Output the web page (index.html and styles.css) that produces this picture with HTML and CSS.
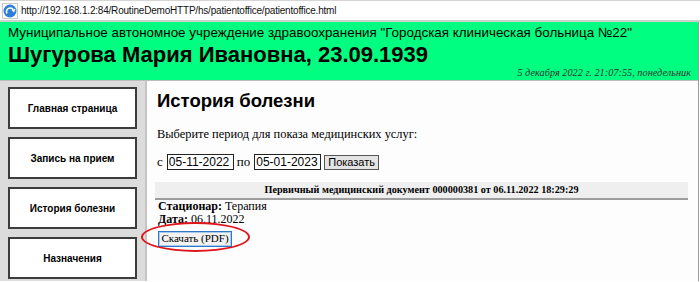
FILE: index.html
```html
<!DOCTYPE html>
<html lang="ru">
<head>
    <meta charset="UTF-8">
    <title>Личный кабинет пациента</title>
    <link rel="stylesheet" href="styles.css">
</head>
<body>
    <div class="addr-bar">
        <span class="addr-icon">
            <svg width="14" height="14" viewBox="0 0 14 14">
                <circle cx="7" cy="7" r="6.5" fill="#2f7fd8"/>
                <path d="M4 9.5 A3.6 3.6 0 1 1 10.5 6.5" fill="none" stroke="#fff" stroke-width="1.6"/>
                <path d="M9 5.5 L10.8 7.4 L12 5" fill="none" stroke="#fff" stroke-width="1.2"/>
            </svg>
        </span>
        <span class="addr-url">http://192.168.1.2:84/RoutineDemoHTTP/hs/patientoffice/patientoffice.html</span>
    </div>
    <div class="page">
        <div class="header">
            <div class="org">Муниципальное автономное учреждение здравоохранения "Городская клиническая больница №22"</div>
            <div class="patient">Шугурова Мария Ивановна, 23.09.1939</div>
            <div class="now">5 декабря 2022 г. 21:07:55, понедельник</div>
        </div>
        <div class="main">
            <div class="sidebar">
                <button class="nav-btn">Главная страница</button>
                <button class="nav-btn">Запись на прием</button>
                <button class="nav-btn">История болезни</button>
                <button class="nav-btn">Назначения</button>
            </div>
            <div class="content">
                <h1>История болезни</h1>
                <p class="hint">Выберите период для показа медицинских услуг:</p>
                <div class="period">
                    с <input type="text" class="date-input" value="05-11-2022">
                    по <input type="text" class="date-input" value="05-01-2023">
                    <button class="show-btn">Показать</button>
                </div>
                <div class="doc">
                    <div class="doc-title">Первичный медицинский документ 000000381 от 06.11.2022 18:29:29</div>
                    <div class="doc-line"><b>Стационар:</b> Терапия</div>
                    <div class="doc-line"><b>Дата:</b> 06.11.2022</div>
                    <div class="pdf-wrap">
                        <button class="pdf-btn">Скачать (PDF)</button>
                        <div class="mark"></div>
                    </div>
                </div>
            </div>
        </div>
    </div>
</body>
</html>
```

FILE: styles.css
```css
body {
    margin: 0;
    width: 700px;
    height: 282px;
    overflow: hidden;
    background: #fff;
    font-family: "Liberation Sans", Arial, sans-serif;
}
.addr-bar {
    height: 19px;
    display: flex;
    align-items: center;
    border-top: 1px solid #d4d4d4;
    border-bottom: 2px solid #cfcfcf;
    background: #fff;
}
.addr-icon {
    width: 16px;
    height: 16px;
    margin-left: 2px;
    display: flex;
    align-items: center;
    justify-content: center;
    border: 1px solid #c8c8c8;
    box-sizing: border-box;
}
.addr-url {
    margin-left: 3px;
    font-size: 10px;
    color: #111;
    letter-spacing: -0.2px;
    white-space: nowrap;
}
.page {
    width: 698px;
    border-right: 1px solid #9a9a9a;
}
.header {
    background: #00ff80;
    padding: 2px 8px 1px 8px;
    border-bottom: 1px solid #bdbdbd;
}
.org {
    font-size: 13.4px;
    line-height: 18px;
    color: #000;
    white-space: nowrap;
}
.patient {
    font-size: 22px;
    font-weight: bold;
    line-height: 25px;
    color: #000;
    white-space: nowrap;
}
.now {
    text-align: right;
    font-family: "Liberation Serif", "Times New Roman", serif;
    font-style: italic;
    font-size: 10.3px;
    line-height: 12px;
    color: #333;
    margin-right: -1px;
}
.main {
    display: flex;
    height: 200px;
}
.sidebar {
    width: 147px;
    background: #dcdcdc;
    border-right: 2px solid #c4c4c4;
    padding: 6px 0 0 8px;
    box-sizing: border-box;
    display: flex;
    flex-direction: column;
    gap: 8px;
}
.nav-btn {
    width: 129px;
    height: 42px;
    background: #fff;
    border: 2px solid #3c3c3c;
    font-family: "Liberation Sans", Arial, sans-serif;
    font-size: 10px;
    font-weight: bold;
    color: #000;
    flex-shrink: 0;
}
.content {
    flex: 1;
    padding: 0 10px 0 8px;
    background: #fdfdfd;
    font-family: "Liberation Serif", "Times New Roman", serif;
}
h1 {
    font-family: "Liberation Sans", Arial, sans-serif;
    font-size: 18.5px;
    margin: 8px 0 0 2px;
    line-height: 24px;
}
.hint {
    font-size: 12.4px;
    margin: 13px 0 0 2px;
    line-height: 16px;
}
.period {
    margin: 11px 0 0 2px;
    font-size: 13px;
    display: flex;
    align-items: center;
    height: 18px;
}
.date-input {
    width: 67px;
    height: 16px;
    box-sizing: border-box;
    border: 1px solid #222;
    padding: 0 1px;
    margin: 0 3px 0 4px;
    font-family: "Liberation Sans", Arial, sans-serif;
    font-size: 12px;
}
.show-btn {
    height: 15px;
    padding: 0 3px;
    margin-left: 0;
    background: #e4e4e4;
    border: 1px solid #555;
    font-family: "Liberation Sans", Arial, sans-serif;
    font-size: 11px;
    line-height: 13px;
}
.doc {
    margin-top: 11px;
}
.doc-title {
    background: #efefef;
    border-bottom: 2px solid #9d9d9d;
    text-align: center;
    font-weight: bold;
    font-size: 10.2px;
    line-height: 16px;
}
.doc-line {
    font-size: 12px;
    line-height: 13px;
    margin-left: 3px;
}
.pdf-wrap {
    position: relative;
    margin: 2px 0 0 3px;
}
.pdf-btn {
    height: 16px;
    width: 74px;
    padding: 0;
    background: #f2f2f2;
    border: 1px solid #2f78c4;
    box-shadow: inset 0 0 0 1px #a9cbee;
    font-family: "Liberation Serif", "Times New Roman", serif;
    font-size: 11px;
    line-height: 13px;
}
.mark {
    position: absolute;
    left: -17px;
    top: -6px;
    width: 109px;
    height: 30px;
    border: 2px solid #e0141b;
    border-radius: 50%;
    box-sizing: border-box;
}
```
